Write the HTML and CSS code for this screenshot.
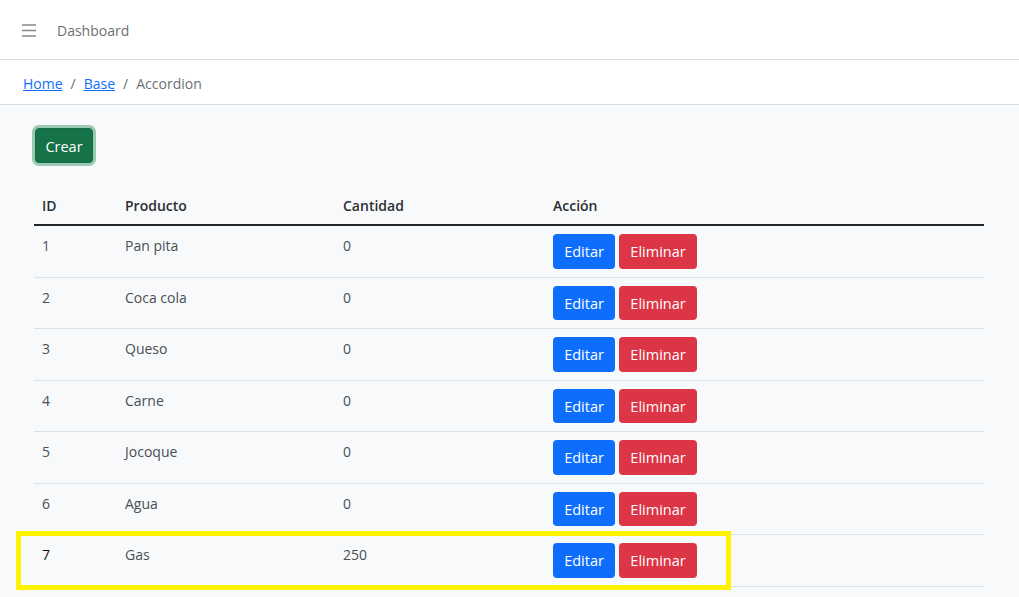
FILE: index.html
```html
<!DOCTYPE html>
<html lang="es">
<head>
<meta charset="utf-8">
<title>Dashboard</title>
<link rel="stylesheet" href="styles.css">
</head>
<body>
<header class="topbar">
  <button class="toggler" aria-label="menu">
    <svg width="14" height="13" viewBox="0 0 14 13"><path d="M0 1H14M0 6.5H14M0 12H14" stroke="#85888b" stroke-width="1.3" fill="none"/></svg>
  </button>
  <span class="brand">Dashboard</span>
</header>
<nav class="crumbs">
  <a href="#">Home</a><span class="sep">/</span><a href="#">Base</a><span class="sep">/</span><span class="current">Accordion</span>
</nav>
<main class="content">
  <div class="actions"><button class="btn btn-crear">Crear</button></div>
  <div class="table-wrap">
    <table class="tbl">
      <thead>
        <tr><th class="c-id">ID</th><th class="c-prod">Producto</th><th class="c-cant">Cantidad</th><th>Acción</th></tr>
      </thead>
      <tbody>
        <tr><td>1</td><td>Pan pita</td><td>0</td><td><button class="btn btn-edit">Editar</button><button class="btn btn-del">Eliminar</button></td></tr>
        <tr><td>2</td><td>Coca cola</td><td>0</td><td><button class="btn btn-edit">Editar</button><button class="btn btn-del">Eliminar</button></td></tr>
        <tr><td>3</td><td>Queso</td><td>0</td><td><button class="btn btn-edit">Editar</button><button class="btn btn-del">Eliminar</button></td></tr>
        <tr><td>4</td><td>Carne</td><td>0</td><td><button class="btn btn-edit">Editar</button><button class="btn btn-del">Eliminar</button></td></tr>
        <tr><td>5</td><td>Jocoque</td><td>0</td><td><button class="btn btn-edit">Editar</button><button class="btn btn-del">Eliminar</button></td></tr>
        <tr><td>6</td><td>Agua</td><td>0</td><td><button class="btn btn-edit">Editar</button><button class="btn btn-del">Eliminar</button></td></tr>
        <tr class="new"><td class="id-dark">7</td><td>Gas</td><td>250</td><td><button class="btn btn-edit">Editar</button><button class="btn btn-del">Eliminar</button></td></tr>
      </tbody>
    </table>
    <div class="highlight"></div>
  </div>
</main>
</body>
</html>
```
FILE: styles.css
```css
* { box-sizing: border-box; }
html, body { margin: 0; padding: 0; }
body {
  font-family: "Open Sans", "Noto Sans", sans-serif;
  font-size: 14px;
  line-height: 24px;
  color: #3d4248;
  background: #f8f9fa;
  height: 597px;
  overflow: hidden;
}
.topbar {
  height: 60px;
  background: #fff;
  border-bottom: 1px solid #d8dbe0;
  display: flex;
  align-items: center;
  padding-left: 22px;
  padding-top: 2px;
}
.toggler {
  border: 0;
  background: none;
  padding: 0;
  margin: 0 21px 0 0;
  display: flex;
  width: 14px;
  height: 13px;
}
.brand { color: #6c7075; font-size: 14px; }
.crumbs {
  height: 45px;
  background: #fff;
  border-bottom: 1px solid #d8dbe0;
  display: flex;
  align-items: center;
  padding-left: 23px;
  padding-top: 4px;
  font-size: 14px;
}
.crumbs a { color: #0d6efd; text-decoration: underline; }
.crumbs .sep { color: #6c7075; margin: 0 8px; }
.crumbs .current { color: #6c7075; }
.content { padding: 23px 35px 0 34px; }
.actions { display: flex; padding-left: 1px; margin-bottom: 24px; }
.btn {
  font-family: inherit;
  font-size: 14.5px;
  line-height: 22px;
  border: 1px solid transparent;
  border-radius: 4px;
  color: #fff;
  height: 34.5px;
  cursor: pointer;
}
.btn-crear {
  background: #157347;
  border-color: #146c43;
  box-shadow: 0 0 0 3px rgba(60,153,110,.5);
  width: 58px;
  height: 35px;
  padding: 7px 0 5px;
}
.btn-edit { background: #0d6efd; width: 62px; padding: 6px 0 5px; }
.btn-del { background: #dc3545; width: 78px; padding: 6px 0 5px; margin-left: 4px; }
.table-wrap { position: relative; width: 950px; }
.tbl {
  width: 950px;
  border-collapse: collapse;
}
.tbl th, .tbl td {
  padding: 8px;
  text-align: left;
  vertical-align: top;
}
.tbl th {
  font-weight: 600;
  color: #2b2f33;
  line-height: 22px;
  padding-bottom: 7px;
  border-bottom: 2px solid #212529;
}
.tbl td { border-bottom: 1px solid #dee2e6; color: #4a4f55; }
.tbl td:first-child, .tbl th:first-child { width: 83px; }
.c-prod { width: 218px; }
.c-cant { width: 210px; }
.tbl td .btn { vertical-align: top; }
.tbl .id-dark { color: #111; }
.highlight {
  position: absolute;
  left: -18px;
  top: 344px;
  width: 715px;
  height: 59px;
  border: 5px solid #fff200;
  pointer-events: none;
}
```
